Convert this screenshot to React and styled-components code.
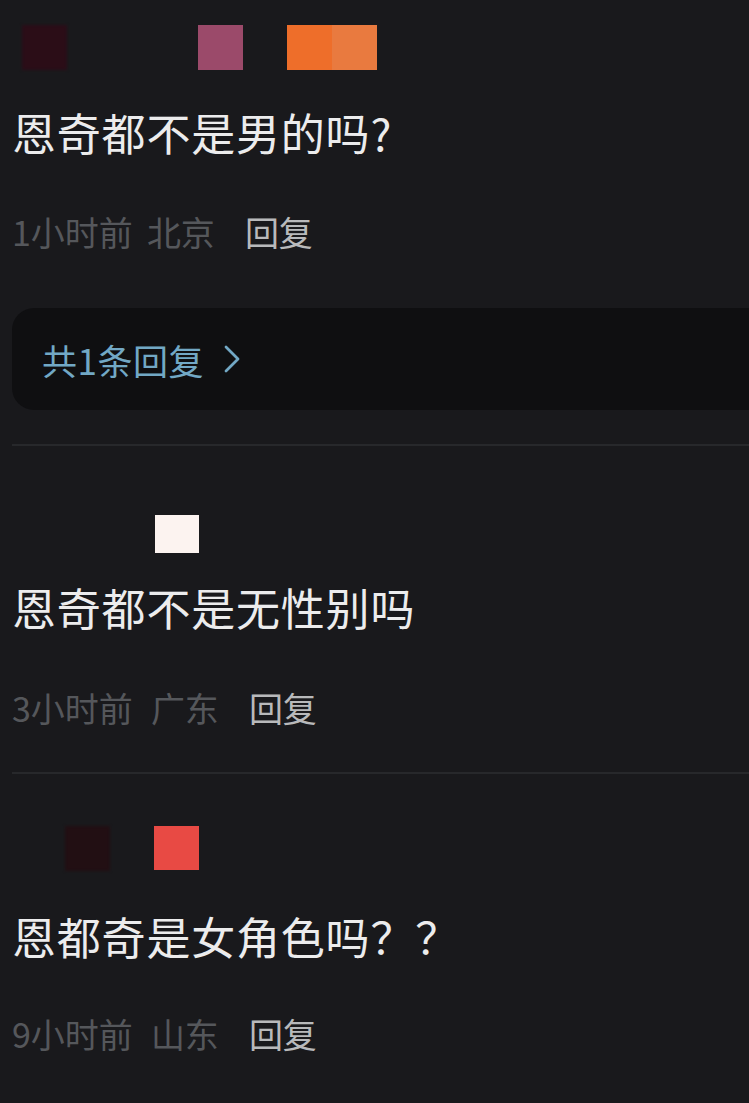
import React from "react";
import styled, { createGlobalStyle } from "styled-components";

const GlobalStyle = createGlobalStyle`
  html, body {
    margin: 0;
    padding: 0;
    background: #19191c;
  }
  body {
    font-family: "Noto Sans CJK SC", "Noto Sans", sans-serif;
    overflow: hidden;
  }
`;

const Page = styled.div`
  width: 749px;
  height: 1103px;
  box-sizing: border-box;
  padding: 25px 0 0 12px;
  background: #19191c;
  overflow: hidden;
`;

const Comment = styled.section`
  display: flex;
  flex-direction: column;
  margin-top: ${(p) => p.$top}px;
`;

const NameRow = styled.div`
  display: flex;
  align-items: flex-start;
  height: 45px;
`;

const Block = styled.div`
  flex: none;
  width: ${(p) => p.$w}px;
  height: ${(p) => p.$h}px;
  margin-left: ${(p) => p.$left}px;
  margin-top: ${(p) => p.$mt || 0}px;
  background: ${(p) => p.$bg};
  filter: ${(p) => (p.$soft ? "blur(1.5px)" : "none")};
`;

const Content = styled.p`
  margin: ${(p) => p.$gap}px 0 0;
  font-size: 44px;
  line-height: 60px;
  color: #ececed;
  letter-spacing: 0.8px;
  white-space: nowrap;
`;

const Meta = styled.div`
  display: flex;
  align-items: center;
  margin-top: ${(p) => p.$gap}px;
  height: 44px;
  font-size: 34px;
  line-height: 44px;
  white-space: nowrap;
`;

const MetaInfo = styled.span`
  color: #55575b;
  margin-left: ${(p) => p.$left || 0}px;
`;

const ReplyAction = styled.span`
  margin-left: 30px;
  color: #b8b9bb;
`;

const RepliesBox = styled.div`
  display: flex;
  align-items: center;
  gap: 18px;
  margin-top: 54px;
  height: 102px;
  margin-right: -40px;
  padding-left: 30px;
  border-radius: 22px;
  background: #0f0f11;
  color: #72a8c5;
  font-size: 35px;
  letter-spacing: 0.5px;
`;

const Divider = styled.hr`
  margin: ${(p) => p.$gap}px 0 0;
  border: none;
  height: 2px;
  background: #27282b;
`;

const Chevron = () => (
  <svg width="20" height="30" viewBox="0 0 20 30">
    <polyline
      points="4,3 16,15 4,27"
      fill="none"
      stroke="#72a8c5"
      strokeWidth="2.8"
      strokeLinecap="round"
      strokeLinejoin="round"
    />
  </svg>
);

const comments = [
  {
    top: 0,
    blocks: [
      { left: 10, w: 45, h: 45, bg: "#2b0d17", soft: true },
      { left: 131, w: 45, h: 45, bg: "#9b4a6a" },
      { left: 44, w: 90, h: 45, bg: "linear-gradient(90deg, #ee6e2a 50%, #e97a3f 50%)" },
    ],
    textGap: 32,
    text: "恩奇都不是男的吗?",
    metaGap: 48,
    time: "1小时前",
    place: "北京",
    placeGap: 14,
    replies: 1,
    dividerGap: 34,
  },
  {
    top: 54,
    blocks: [{ left: 143, w: 44, h: 38, mt: 15, bg: "#fcf3f0" }],
    textGap: 32,
    text: "恩奇都不是无性别吗",
    metaGap: 49,
    time: "3小时前",
    place: "广东",
    placeGap: 18,
    dividerGap: 42,
  },
  {
    top: 52,
    blocks: [
      { left: 53, w: 45, h: 45, bg: "#220f13", soft: true },
      { left: 44, w: 45, h: 44, bg: "#e84a44" },
    ],
    textGap: 35,
    text: "恩都奇是女角色吗？？",
    metaGap: 46,
    time: "9小时前",
    place: "山东",
    placeGap: 18,
  },
];

export default function App() {
  return (
    <Page>
      <GlobalStyle />
      {comments.map((c, i) => (
        <Comment key={i} $top={c.top}>
          <NameRow>
            {c.blocks.map((b, j) => (
              <Block
                key={j}
                $left={b.left}
                $w={b.w}
                $h={b.h}
                $mt={b.mt}
                $bg={b.bg}
                $soft={b.soft}
              />
            ))}
          </NameRow>
          <Content $gap={c.textGap}>{c.text}</Content>
          <Meta $gap={c.metaGap}>
            <MetaInfo>{c.time}</MetaInfo>
            <MetaInfo $left={c.placeGap}>{c.place}</MetaInfo>
            <ReplyAction>回复</ReplyAction>
          </Meta>
          {c.replies && (
            <RepliesBox>
              <span>共{c.replies}条回复</span>
              <Chevron />
            </RepliesBox>
          )}
          {c.dividerGap && <Divider $gap={c.dividerGap} />}
        </Comment>
      ))}
    </Page>
  );
}
